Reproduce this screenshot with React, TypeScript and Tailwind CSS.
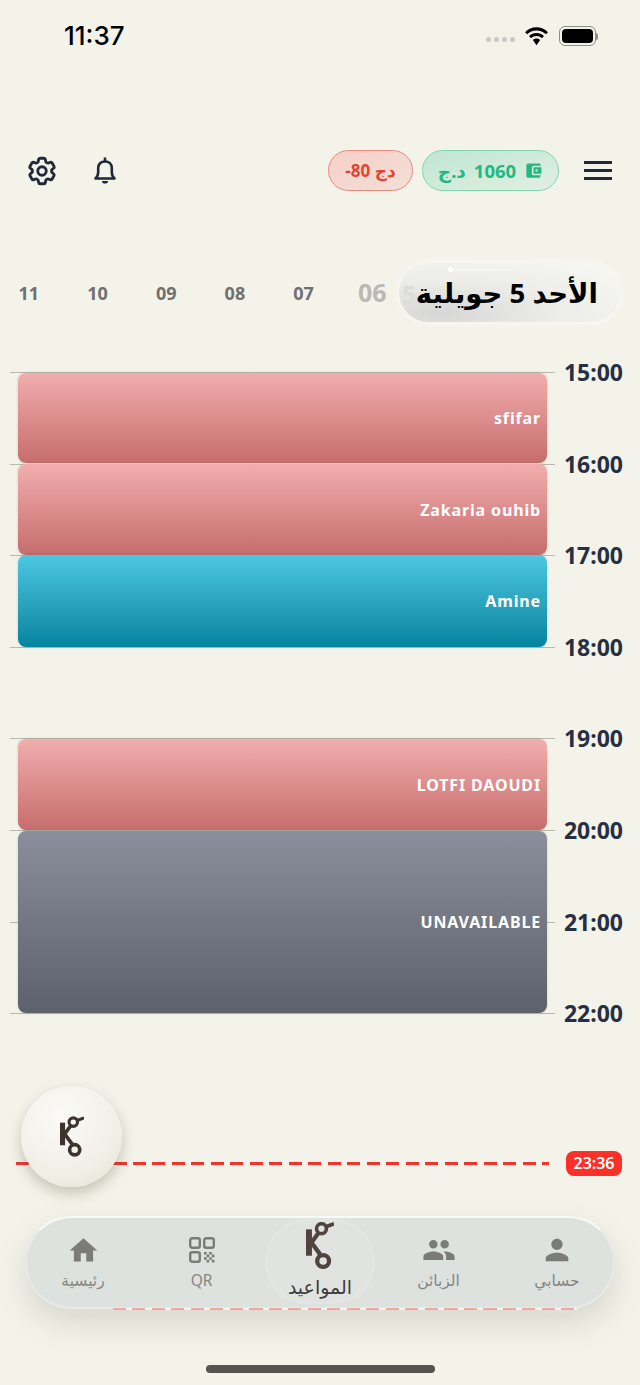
import { HiOutlineCog6Tooth } from 'react-icons/hi2';
import { MdAccountBalanceWallet, MdHome, MdPeople, MdPerson } from 'react-icons/md';

const FONT = 'font-["Noto_Sans","DejaVu_Sans",sans-serif]';

const Logo = ({ className }: { className: string }) => (
  <svg viewBox="0 0 85 142" className={className} fill="none" stroke="currentColor">
    <rect x="0" y="22" width="18" height="80" fill="currentColor" stroke="none" />
    <path d="M12 68 L38 33 M12 56 L43 98" strokeWidth="13" />
    <circle cx="47" cy="20" r="15" strokeWidth="11" />
    <path d="M58 15 L85 5" strokeWidth="11" />
    <circle cx="52" cy="118" r="18" strokeWidth="13" />
  </svg>
);

const BellIcon = () => (
  <svg viewBox="0 0 22 27" className="w-[22px] h-[27px] text-[#1f2937]" fill="none" stroke="currentColor">
    <path
      d="M1.500 21.500H20.500C18.500 20 17.800 18 17.800 15V11C17.800 7 15 4.500 11 4.500C7 4.500 4.200 7 4.200 11V15C4.200 18 3.500 20 1.500 21.500Z"
      strokeWidth="2.600"
      strokeLinejoin="round"
    />
    <path d="M11 .5V4.500" strokeWidth="2.600" />
    <path d="M8 24h6a3 2.600 0 0 1-6 0z" fill="currentColor" stroke="none" />
  </svg>
);

const QrIcon = () => (
  <svg viewBox="0 0 26 26" className="w-[26px] h-[26px]" fill="none" stroke="#7b7c7a" strokeWidth="2.400">
    <rect x="1.200" y="1.200" width="9.600" height="9.600" rx="2" />
    <rect x="15.200" y="1.200" width="9.600" height="9.600" rx="2" />
    <rect x="1.200" y="15.200" width="9.600" height="9.600" rx="2" />
    <path
      d="M15 15h2.600v2.600H15zM20.200 15h2.600v2.600h-2.600zM17.600 17.600h2.600v2.600h-2.600zM22.800 17.600h2.600v2.600h-2.600zM15 20.200h2.600v2.600H15zM20.200 20.200h2.600v2.600h-2.600zM17.600 22.800h2.600v2.600h-2.600zM22.800 22.800h2.600v2.600h-2.600z"
      fill="#7b7c7a"
      stroke="none"
    />
  </svg>
);

const hours = ['15:00', '16:00', '17:00', '18:00', '19:00', '20:00', '21:00', '22:00'];
const days = ['11', '10', '09', '08', '07'];

const pink = 'bg-gradient-to-b from-[#f1aeae] to-[#c66d6d]';
const cyan = 'bg-gradient-to-b from-[#4ac8e2] to-[#00849f]';

const Booking = ({ name, color, height }: { name: string; color: string; height: string }) => (
  <div className={`${color} ${height} rounded-lg flex items-center justify-end pr-[6px] shadow-[0_0_3px_rgba(0,0,0,0.15)]`}>
    <span className="text-white font-bold text-[16px] tracking-[0.850px]">{name}</span>
  </div>
);

const NavItem = ({ icon, label }: { icon: React.ReactNode; label: string }) => (
  <div className="w-[118.500px] shrink-0 pt-[16px] flex flex-col items-center">
    <div className="h-[32px] flex items-center justify-center">{icon}</div>
    <span className="mt-[3px] text-[15.500px] leading-[22px] text-[#858684]">{label}</span>
  </div>
);

export default function App() {
  return (
    <div className={`${FONT} relative w-[640px] h-[1385px] overflow-hidden bg-[#f4f3ea]`}>
      {/* Status bar */}
      <div className="h-[72px] flex items-center justify-between pl-[64px] pr-[42px]">
        <span className="font-['Inter'] font-medium text-[26px] leading-none text-black">11:37</span>
        <div className="flex items-center gap-[9px]">
          <div className="flex gap-[3px] mt-[7px]">
            <span className="w-[5px] h-[5px] rounded-full bg-[#c8c8c4]" />
            <span className="w-[5px] h-[5px] rounded-full bg-[#c8c8c4]" />
            <span className="w-[5px] h-[5px] rounded-full bg-[#c8c8c4]" />
            <span className="w-[5px] h-[5px] rounded-full bg-[#c8c8c4]" />
          </div>
          <svg viewBox="0 0 24 18" className="w-[25px] h-[19px]" fill="black">
            <path d="M12 3.200c3.500 0 6.700 1.400 9 3.700l2-2.100C20 1.800 16.200.2 12 .2S4 1.800 1 4.800l2 2.100c2.300-2.300 5.500-3.700 9-3.700z" />
            <path d="M12 8.600c2 0 3.800.8 5.200 2.100l2-2.100C17.300 6.800 14.800 5.600 12 5.600S6.700 6.800 4.800 8.600l2 2.100C8.200 9.400 10 8.600 12 8.600z" />
            <path d="M12 11c-1.400 0-2.600.5-3.500 1.400L12 17.500l3.500-5.100C14.600 11.500 13.400 11 12 11z" />
          </svg>
          <div className="flex items-center ml-[1px]">
            <div className="w-[37px] h-[20px] rounded-[6px] border border-[#8f8f88] p-[2px]">
              <div className="w-full h-full rounded-[4px] bg-black" />
            </div>
            <div className="w-[2px] h-[7px] rounded-r bg-[#8f8f88]" />
          </div>
        </div>
      </div>

      {/* Header */}
      <div className="mt-[78px] h-[41px] flex items-center pl-[25px] pr-[28px]">
        <HiOutlineCog6Tooth className="w-[34px] h-[34px] text-[#1f2937]" strokeWidth={2} />
        <div className="ml-[35px]">
          <BellIcon />
        </div>
        <div className="ml-auto w-[85px] h-[41px] rounded-full border border-[#e9897c] bg-gradient-to-br from-[#f7cfc7] to-[#f1e0d8] flex items-center justify-center text-[#e5432f] font-bold text-[17px]">
          <span dir="rtl">دج 80-</span>
        </div>
        <div className="ml-[9px] w-[137px] h-[41px] rounded-full border border-[#7fd6ae] bg-gradient-to-br from-[#bfe6d2] to-[#e2efe3] flex items-center justify-center gap-[8px] text-[#22b981] font-bold text-[18.500px]">
          <span>د.ج</span>
          <span>1060</span>
          <MdAccountBalanceWallet className="w-[19px] h-[19px]" />
        </div>
        <div className="ml-[25px] w-[28px] flex flex-col gap-[5px]">
          <span className="h-[3px] bg-[#1f2937]" />
          <span className="h-[3px] bg-[#1f2937]" />
          <span className="h-[3px] bg-[#1f2937]" />
        </div>
      </div>

      {/* Day strip */}
      <div className="relative mt-[72px] h-[60px] flex items-center">
        <div className="flex items-center -ml-[5.500px]">
          {days.map((d) => (
            <span key={d} className="w-[68.700px] text-center text-[18px] font-bold text-[#6f7070]">
              {d}
            </span>
          ))}
          <span className="w-[68.700px] text-center text-[25px] font-bold text-[#b9b9b5]">06</span>
        </div>
        <div className="absolute right-[20px] top-0 w-[221px] h-[59px] rounded-[30px] bg-[radial-gradient(ellipse_at_18%_85%,#d6d6d4_0%,#ecece9_45%,#f8f8f5_100%)] shadow-[0_0_10px_rgba(255,255,255,0.6)] flex items-center justify-end pr-[22px]">
          <span className="absolute left-[3px] top-[13px] text-[25px] font-bold text-[#dcdcd9]">5</span>
          <span className="absolute left-[49px] top-[4px] w-[5px] h-[5px] rounded-full bg-white" />
          <span className="absolute left-[54px] top-[6px] w-[60px] h-[2px] bg-white/40" />
          <span dir="rtl" className="relative text-[27.500px] font-bold text-black whitespace-nowrap">
            الأحد 5 جويلية
          </span>
        </div>
      </div>

      {/* Timeline */}
      <div className="relative mt-[49px]">
        {hours.map((h) => (
          <div key={h} className="h-[91.600px] flex items-start pl-[10px] pr-[17px]">
            <div className="flex-1 h-px bg-[#b9b9ae]" />
            <span className="ml-[9px] -mt-[15px] text-[23px] leading-[30px] font-bold text-[#263042]">{h}</span>
          </div>
        ))}
        <div className="absolute inset-0 pt-[1px] pl-[18px] pr-[93px] flex flex-col">
          <Booking name="sfifar" color={pink} height="h-[90px]" />
          <div className="h-[1px] shrink-0" />
          <Booking name="Zakaria ouhib" color={pink} height="h-[91px]" />
          <Booking name="Amine" color={cyan} height="h-[92px]" />
          <div className="h-[92px] shrink-0" />
          <Booking name="LOTFI DAOUDI" color={pink} height="h-[91px]" />
          <div className="h-[1px] shrink-0" />
          <Booking name="UNAVAILABLE" color="bg-gradient-to-b from-[#8b8f9b] to-[#5d616c]" height="h-[182px]" />
        </div>
      </div>

      {/* Current time */}
      <div className="absolute left-[16px] top-[1151px] w-[606px] h-[25px] flex items-center justify-between">
        <div className="w-[533px] h-[3px] bg-[repeating-linear-gradient(90deg,#f0342c_0,#f0342c_13px,transparent_13px,transparent_19.500px)]" />
        <span className="w-[56px] h-[25px] rounded-lg bg-[#fb3028] text-white text-[16px] leading-[25px] font-semibold text-center">
          23:36
        </span>
      </div>

      {/* Floating button */}
      <div className="absolute left-[21px] top-[1086px] w-[101px] h-[101px] rounded-full bg-[radial-gradient(circle_at_40%_30%,#fbfaf6_0%,#f1eee6_65%,#e2ded3_100%)] shadow-[0_6px_14px_rgba(90,80,60,0.3)] flex items-center justify-center text-[#3f332e]">
        <Logo className="w-[24px] h-[41px]" />
      </div>

      {/* Bottom nav */}
      <div className="absolute left-[25px] top-[1216px] w-[590px] h-[93px] rounded-[47px] border-2 border-white/30 border-t-white/80 bg-[#dde2df] shadow-[0_14px_30px_rgba(120,120,110,0.22)] flex items-start justify-center">
        <NavItem icon={<MdHome className="w-[33px] h-[33px] text-[#7b7c7a]" />} label="رئيسية" />
        <NavItem icon={<QrIcon />} label="QR" />
        <div className="relative w-[118.500px] shrink-0 pt-[4px] flex flex-col items-center text-[#51443f]">
          <div className="absolute left-[4px] top-[1px] w-[110px] h-[85px] rounded-[42px] bg-[#e0e3e0] shadow-[inset_0_0_5px_rgba(255,255,255,0.35)]" />
          <Logo className="relative w-[28px] h-[47px]" />
          <span className="relative mt-[5px] text-[19px] leading-[26px] text-[#3d3b38] whitespace-nowrap">المواعيد</span>
        </div>
        <NavItem icon={<MdPeople className="w-[34px] h-[34px] text-[#7b7c7a]" />} label="الزبائن" />
        <NavItem icon={<MdPerson className="w-[34px] h-[34px] text-[#7b7c7a]" />} label="حسابي" />
      </div>
      <div className="absolute left-[113px] top-[1308px] w-[464px] h-[2px] bg-[repeating-linear-gradient(90deg,#f3a69e_0,#f3a69e_13px,#f7f5ee_13px,#f7f5ee_19.500px)]" />

      {/* Home indicator */}
      <div className="absolute left-[206px] top-[1365px] w-[229px] h-[8px] rounded-full bg-[#55544f]" />
    </div>
  );
}
